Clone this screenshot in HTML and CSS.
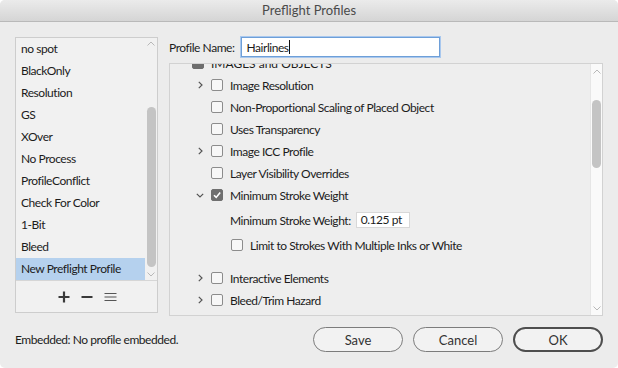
FILE: index.html
```html
<!DOCTYPE html>
<html lang="en">
<head>
    <meta charset="UTF-8" />
    <title>Preflight Profiles</title>
    <link rel="stylesheet" href="styles.css">
</head>
<body>
<div class="window">
    <div class="titlebar">Preflight Profiles</div>

    <div class="content">
        <div class="main">
            <!-- profile list -->
            <div class="profiles">
                <div class="list-area">
                    <ul class="list">
                        <li>no spot</li>
                        <li>BlackOnly</li>
                        <li>Resolution</li>
                        <li>GS</li>
                        <li>XOver</li>
                        <li>No Process</li>
                        <li>ProfileConflict</li>
                        <li>Check For Color</li>
                        <li>1-Bit</li>
                        <li>Bleed</li>
                        <li class="selected">New Preflight Profile</li>
                    </ul>
                    <div class="scrollbar list-scroll">
                        <svg class="arrow" width="8" height="5" viewBox="0 0 8 5"><path d="M0.5 4.5 L4 1 L7.5 4.5" fill="none" stroke="#b8b8b8" stroke-width="1"/></svg>
                        <div class="thumb"></div>
                        <svg class="arrow" width="8" height="5" viewBox="0 0 8 5"><path d="M0.5 0.5 L4 4 L7.5 0.5" fill="none" stroke="#b8b8b8" stroke-width="1"/></svg>
                    </div>
                </div>
                <div class="list-tools">
                    <svg width="12" height="12" viewBox="0 0 12 12"><path d="M6 0.5 V11.5 M0.5 6 H11.5" stroke="#3a3a3a" stroke-width="2.2"/></svg>
                    <svg width="12" height="12" viewBox="0 0 12 12"><path d="M0.5 6 H11.5" stroke="#3a3a3a" stroke-width="2.2"/></svg>
                    <svg width="13" height="12" viewBox="0 0 13 12"><path d="M0.5 2.5 H12.5 M0.5 6 H12.5 M0.5 9.5 H12.5" stroke="#555" stroke-width="1.1"/></svg>
                </div>
            </div>

            <!-- profile settings -->
            <div class="settings">
                <div class="name-row">
                    <label for="profileName">Profile Name:</label>
                    <div class="name-input"><span>Hairlines</span><span class="caret"></span></div>
                </div>

                <div class="tree-panel">
                    <div class="tree">
                        <div class="row top">
                            <span class="chev"></span>
                            <span class="box filled"></span>
                            <span class="caps">IMAGES and OBJECTS</span>
                        </div>
                        <div class="row">
                            <span class="chev"><svg width="5" height="8" viewBox="0 0 5 8"><path d="M0.8 0.8 L4 4 L0.8 7.2" fill="none" stroke="#555" stroke-width="1.2"/></svg></span>
                            <span class="box"></span>
                            <span>Image Resolution</span>
                        </div>
                        <div class="row">
                            <span class="chev"></span>
                            <span class="box"></span>
                            <span>Non-Proportional Scaling of Placed Object</span>
                        </div>
                        <div class="row">
                            <span class="chev"></span>
                            <span class="box"></span>
                            <span>Uses Transparency</span>
                        </div>
                        <div class="row">
                            <span class="chev"><svg width="5" height="8" viewBox="0 0 5 8"><path d="M0.8 0.8 L4 4 L0.8 7.2" fill="none" stroke="#555" stroke-width="1.2"/></svg></span>
                            <span class="box"></span>
                            <span>Image ICC Profile</span>
                        </div>
                        <div class="row">
                            <span class="chev"></span>
                            <span class="box"></span>
                            <span>Layer Visibility Overrides</span>
                        </div>
                        <div class="row">
                            <span class="chev"><svg width="8" height="5" viewBox="0 0 8 5"><path d="M0.8 0.8 L4 4 L7.2 0.8" fill="none" stroke="#555" stroke-width="1.2"/></svg></span>
                            <span class="box checked"><svg width="12" height="12" viewBox="0 0 12 12"><path d="M3 6.2 L5.2 8.4 L9.2 3.6" fill="none" stroke="#fff" stroke-width="1.6"/></svg></span>
                            <span>Minimum Stroke Weight</span>
                        </div>
                        <div class="options">
                            <div class="opt-row">
                                <span>Minimum Stroke Weight:</span>
                                <span class="small-input">0.125 pt</span>
                            </div>
                            <div class="opt-row">
                                <span class="box"></span>
                                <span class="opt-text">Limit to Strokes With Multiple Inks or White</span>
                            </div>
                        </div>
                        <div class="row">
                            <span class="chev"><svg width="5" height="8" viewBox="0 0 5 8"><path d="M0.8 0.8 L4 4 L0.8 7.2" fill="none" stroke="#555" stroke-width="1.2"/></svg></span>
                            <span class="box"></span>
                            <span>Interactive Elements</span>
                        </div>
                        <div class="row">
                            <span class="chev"><svg width="5" height="8" viewBox="0 0 5 8"><path d="M0.8 0.8 L4 4 L0.8 7.2" fill="none" stroke="#555" stroke-width="1.2"/></svg></span>
                            <span class="box"></span>
                            <span>Bleed/Trim Hazard</span>
                        </div>
                        <div class="row">
                            <span class="chev"></span>
                            <span class="box"></span>
                        </div>
                    </div>
                    <div class="scrollbar tree-scroll">
                        <svg class="arrow" width="8" height="5" viewBox="0 0 8 5"><path d="M0.5 4.5 L4 1 L7.5 4.5" fill="none" stroke="#b8b8b8" stroke-width="1"/></svg>
                        <div class="thumb"></div>
                        <svg class="arrow down" width="8" height="5" viewBox="0 0 8 5"><path d="M0.5 0.5 L4 4 L7.5 0.5" fill="none" stroke="#b8b8b8" stroke-width="1"/></svg>
                    </div>
                </div>
            </div>
        </div>

        <div class="footer">
            <div class="embedded">Embedded: No profile embedded.</div>
            <div class="buttons">
                <button>Save</button>
                <button>Cancel</button>
                <button class="default">OK</button>
            </div>
        </div>
    </div>
</div>
</body>
</html>
```

FILE: styles.css
```css
* {
    box-sizing: border-box;
    margin: 0;
    padding: 0;
}

body {
    background: #ffffff;
    font-family: 'Lato', 'Liberation Sans', sans-serif;
    font-size: 12px;
    letter-spacing: -0.45px;
    color: #1c1c1c;
}

.window {
    width: 618px;
    height: 368px;
    background: #ececec;
    border-radius: 5px;
    overflow: hidden;
}

.titlebar {
    height: 22px;
    line-height: 21px;
    text-align: center;
    font-size: 13px;
    letter-spacing: 0;
    color: #4a4a4a;
    background: linear-gradient(#ebebeb, #d5d5d5);
    border-bottom: 1px solid #b9b9b9;
}

.content {
    padding: 15px 15px 0;
}

.main {
    display: flex;
    gap: 11px;
    height: 279px;
}

/* left list */
.profiles {
    width: 143px;
    height: 276px;
    border: 1px solid #cdcdcd;
    background: #f1f1f1;
    display: flex;
    flex-direction: column;
}

.list-area {
    display: flex;
    height: 243px;
    border-bottom: 1px solid #d6d6d6;
}

.list {
    list-style: none;
    flex: 1;
}

.list li {
    height: 22px;
    line-height: 22px;
    padding-left: 5px;
}

.list li.selected {
    background: #b5d1ee;
}

.scrollbar {
    width: 12px;
    display: flex;
    flex-direction: column;
    align-items: center;
}

.scrollbar .thumb {
    width: 9px;
    border-radius: 5px;
    background: #c4c4c4;
}

.list-scroll {
    padding-top: 3px;
}

.list-scroll .thumb {
    margin-top: 61px;
    height: 160px;
}

.list-scroll .arrow + .thumb + .arrow {
    margin-top: 5px;
}

.list-tools {
    flex: 1;
    display: flex;
    align-items: center;
    justify-content: center;
    gap: 11px;
    padding-left: 2px;
}

/* right settings */
.settings {
    flex: 1;
    display: flex;
    flex-direction: column;
    gap: 6px;
}

.name-row {
    display: flex;
    align-items: center;
    gap: 6px;
    height: 20px;
}

.name-input {
    width: 199px;
    height: 20px;
    background: #ffffff;
    border: 1px solid #6e9fd8;
    box-shadow: 0 0 0 1px #a9c8ee;
    padding-left: 5px;
    display: flex;
    align-items: center;
}

.caret {
    width: 1px;
    height: 14px;
    background: #111;
}

.tree-panel {
    height: 253px;
    border: 1px solid #d2d2d2;
    background: #eeeeee;
    display: flex;
    overflow: hidden;
}

.tree {
    flex: 1;
    margin-top: -12px;
}

.row {
    height: 22px;
    display: flex;
    align-items: center;
    padding-left: 26px;
}

.row.top {
    padding-left: 7px;
}

.chev {
    width: 8px;
    display: flex;
    justify-content: center;
    margin-right: 7px;
}

.box {
    width: 12px;
    height: 12px;
    border: 1px solid #8c8c8c;
    border-radius: 2px;
    background: #f7f7f7;
    margin-right: 7px;
    flex-shrink: 0;
}

.box.filled {
    background: #6d6d6d;
    border-color: #6d6d6d;
}

.box.checked {
    background: #6f6f6f;
    border-color: #6f6f6f;
    position: relative;
}

.box.checked svg {
    position: absolute;
    left: -1px;
    top: -1px;
}

.caps {
    letter-spacing: 0;
}

.options {
    padding: 3px 0 11px 60px;
    display: flex;
    flex-direction: column;
    gap: 3px;
}

.opt-row {
    height: 22px;
    display: flex;
    align-items: center;
}

.opt-row .box {
    margin-left: 1px;
}

.small-input {
    width: 54px;
    height: 16px;
    margin-left: 5px;
    background: #ffffff;
    border: 1px solid #d8d8d8;
    line-height: 14px;
    padding-left: 4px;
}

.tree-scroll {
    background: #fafafa;
    border-left: 1px solid #e6e6e6;
    padding: 5px 0 4px;
}

.tree-scroll .thumb {
    margin-top: 26px;
    height: 68px;
}

.tree-scroll .arrow.down {
    margin-top: auto;
}

/* footer */
.footer {
    display: flex;
    align-items: center;
    justify-content: space-between;
    margin-top: 11px;
    height: 25px;
}

.buttons {
    display: flex;
    gap: 10px;
}

button {
    width: 90px;
    height: 25px;
    border: 1px solid #7c7c7c;
    border-radius: 13px;
    background: #f2f2f2;
    font-family: 'Lato', 'Liberation Sans', sans-serif;
    font-size: 13px;
    letter-spacing: 0;
    color: #333;
}

button.default {
    border: 2px solid #4e4e4e;
}
```
